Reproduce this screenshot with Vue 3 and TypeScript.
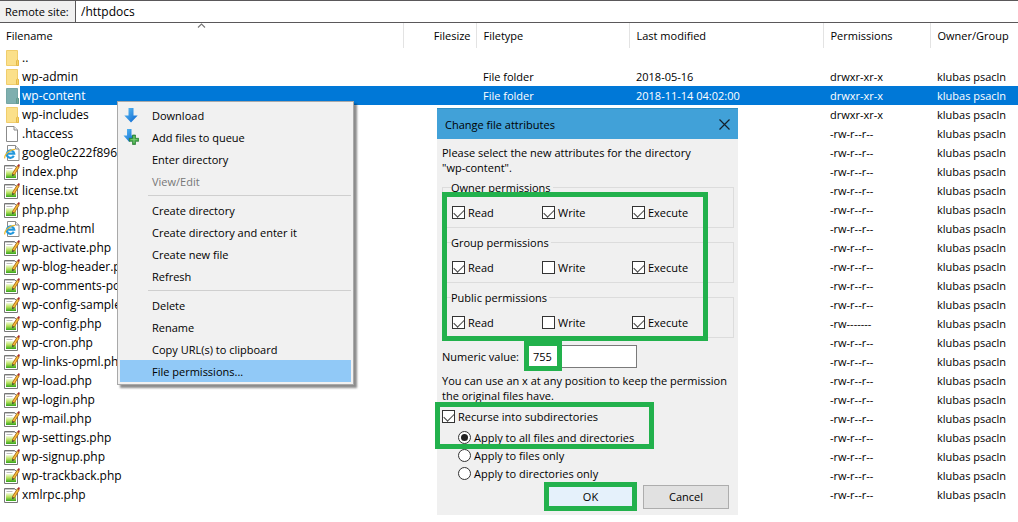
<script setup lang="ts">
import { ref } from 'vue'

type Kind = 'folder' | 'blank' | 'web' | 'script'
interface Entry {
  name: string
  kind: Kind
  type?: string
  modified?: string
  perms?: string
  owner?: string
}
interface MenuItem {
  label: string
  icon?: 'download' | 'queue'
  disabled?: boolean
  active?: boolean
}

const owner = 'klubas psacln'
const file = (name: string, kind: Kind = 'script', perms = '-rw-r--r--'): Entry => ({ name, kind, perms, owner })

const entries: Entry[] = [
  { name: '..', kind: 'folder' },
  { name: 'wp-admin', kind: 'folder', type: 'File folder', modified: '2018-05-16', perms: 'drwxr-xr-x', owner },
  { name: 'wp-content', kind: 'folder', type: 'File folder', modified: '2018-11-14 04:02:00', perms: 'drwxr-xr-x', owner },
  { name: 'wp-includes', kind: 'folder', perms: 'drwxr-xr-x', owner },
  file('.htaccess', 'blank'),
  file('google0c222f896fc.html', 'web'),
  file('index.php'),
  file('license.txt'),
  file('php.php'),
  file('readme.html', 'web'),
  file('wp-activate.php'),
  file('wp-blog-header.php'),
  file('wp-comments-post.php'),
  file('wp-config-sample.php'),
  file('wp-config.php', 'script', '-rw-------'),
  file('wp-cron.php'),
  file('wp-links-opml.php'),
  file('wp-load.php'),
  file('wp-login.php'),
  file('wp-mail.php'),
  file('wp-settings.php'),
  file('wp-signup.php'),
  file('wp-trackback.php'),
  file('xmlrpc.php'),
]
const selected = 'wp-content'

const menu: MenuItem[][] = [
  [
    { label: 'Download', icon: 'download' },
    { label: 'Add files to queue', icon: 'queue' },
    { label: 'Enter directory' },
    { label: 'View/Edit', disabled: true },
  ],
  [
    { label: 'Create directory' },
    { label: 'Create directory and enter it' },
    { label: 'Create new file' },
    { label: 'Refresh' },
  ],
  [
    { label: 'Delete' },
    { label: 'Rename' },
    { label: 'Copy URL(s) to clipboard' },
    { label: 'File permissions...', active: true },
  ],
]

const groups = ref([
  { title: 'Owner permissions', bits: [{ label: 'Read', on: true }, { label: 'Write', on: true }, { label: 'Execute', on: true }] },
  { title: 'Group permissions', bits: [{ label: 'Read', on: true }, { label: 'Write', on: false }, { label: 'Execute', on: true }] },
  { title: 'Public permissions', bits: [{ label: 'Read', on: true }, { label: 'Write', on: false }, { label: 'Execute', on: true }] },
])
const path = ref('/httpdocs')
const numeric = ref('755')
const recurse = ref(true)
const scopes = ['Apply to all files and directories', 'Apply to files only', 'Apply to directories only']
const scope = ref(scopes[0])
</script>

<template>
  <main class="panel">
    <svg class="defs" aria-hidden="true">
      <defs>
        <linearGradient id="green" x1="0" y1="0" x2="0" y2="1">
          <stop offset="0" stop-color="#f4fbdc" />
          <stop offset="0.5" stop-color="#b4e05a" />
          <stop offset="1" stop-color="#35a51c" />
        </linearGradient>
        <linearGradient id="blue" x1="0" y1="0" x2="1" y2="1">
          <stop offset="0" stop-color="#5cc0f5" />
          <stop offset="1" stop-color="#0a62cf" />
        </linearGradient>
      </defs>
    </svg>

    <div class="address">
      <label for="remote">Remote site:</label>
      <input id="remote" v-model="path" type="text" />
    </div>

    <table class="files">
      <colgroup>
        <col />
        <col class="c-size" />
        <col class="c-type" />
        <col class="c-date" />
        <col class="c-perm" />
        <col class="c-owner" />
      </colgroup>
      <thead>
        <tr>
          <th class="sorted">
            Filename
            <svg class="sort" width="9" height="5" viewBox="0 0 9 5" aria-hidden="true">
              <path d="M1 4.5 4.5 1 8 4.5" fill="none" stroke="#777" stroke-width="1.1" />
            </svg>
          </th>
          <th class="right">Filesize</th>
          <th>Filetype</th>
          <th>Last modified</th>
          <th>Permissions</th>
          <th>Owner/Group</th>
        </tr>
      </thead>
      <tbody>
        <tr v-for="e in entries" :key="e.name" :class="{ selected: e.name === selected }">
          <td class="first">
            <div class="cell">
              <svg class="icon" width="16" height="16" viewBox="0 0 16 16" aria-hidden="true">
                <template v-if="e.kind === 'folder'">
                  <path class="folder" d="M2.5.5h11v9l1 1v5h-12z" />
                  <path class="fold" d="M12.5 15.5v-4.5l1-1.5 1 1.5v4.5z" />
                </template>
                <template v-else-if="e.kind === 'blank'">
                  <path d="M2.500.500h7.500l3.500 3.500v11.500h-11z" fill="#fff" stroke="#8b8b8b" />
                  <path d="M10 .5V4h3.500" fill="#eee" stroke="#8b8b8b" />
                </template>
                <template v-else-if="e.kind === 'web'">
                  <path d="M3.500.500h8l3.500 3.500v11.500H3.500z" fill="#fff" stroke="#8b8b8b" />
                  <path d="M11.500.500V4H15" fill="#eee" stroke="#8b8b8b" />
                  <path d="M9.800 10.800A3.700 3.700 0 1 1 10.200 8.700H3.200" fill="none" stroke="#2197dc" stroke-width="2.200" />
                  <path d="M1 13.300C-.5 11 5 4.300 11.200 4.300" fill="none" stroke="#efb92c" stroke-width="1.200" />
                </template>
                <template v-else>
                  <path d="M.5 1.500h10l3 3v11H.5z" fill="#fff" stroke="#777" />
                  <path d="M2 6h10v8H2z" fill="url(#green)" />
                  <path d="M2 1v2M4 1v2M6 1v2M8 1v2M10 1v2" stroke="#777" stroke-width=".8" />
                  <path d="M2.500 4.500h6" stroke="#bbb" />
                  <path d="M14.500 2 9.200 10.500" stroke="#a86412" stroke-width="3" />
                  <path d="M14.300 2.300 9.300 10.300" stroke="#f6bd3d" stroke-width="1.600" />
                  <path d="m13.400 2 1.200-2 1.400 1-1.100 2z" fill="#a72d31" />
                  <path d="m8.200 12.300.2-2.600 1.900 1.200z" fill="#333" />
                </template>
              </svg>
              <span class="name">{{ e.name }}</span>
            </div>
          </td>
          <td></td>
          <td>{{ e.type }}</td>
          <td>{{ e.modified }}</td>
          <td>{{ e.perms }}</td>
          <td>{{ e.owner }}</td>
        </tr>
      </tbody>
    </table>

    <div class="menu" role="menu">
      <div v-for="(section, i) in menu" :key="i" class="section" role="group">
        <button
          v-for="item in section"
          :key="item.label"
          type="button"
          role="menuitem"
          :disabled="item.disabled"
          :class="{ active: item.active }"
        >
          <span class="slot">
            <svg v-if="item.icon" width="16" height="16" viewBox="0 0 16 16" aria-hidden="true">
              <template v-if="item.icon === 'download'">
                <path d="M5.500 1h5v7.500h4.200L8 15.500 1.300 8.500h4.200z" fill="url(#blue)" />
              </template>
              <template v-else>
                <path d="M4 0h4.500v6.500H12L6.200 13 .5 6.500H4z" fill="url(#blue)" />
                <path d="M9.500 6h3v3.300h3.200v3h-3.200v3.200h-3v-3.200H6.300v-3h3.200z" fill="#3fa442" stroke="#247a32" stroke-width=".7" />
                <path d="M11 7v7M7.500 10.700h7" stroke="#8ad684" stroke-width=".8" />
              </template>
            </svg>
          </span>
          {{ item.label }}
        </button>
      </div>
    </div>

    <form class="dialog" role="dialog" aria-labelledby="title" @submit.prevent>
      <header>
        <h1 id="title">Change file attributes</h1>
        <button type="button" class="close" aria-label="Close">
          <svg width="11" height="11" viewBox="0 0 11 11" aria-hidden="true">
            <path d="m.5.5 10 10m0-10-10 10" stroke="#13202b" stroke-width="1.200" />
          </svg>
        </button>
      </header>
      <div class="body">
        <p>Please select the new attributes for the directory<br />"wp-content".</p>

        <div class="groups">
          <fieldset v-for="g in groups" :key="g.title">
            <legend>{{ g.title }}</legend>
            <label v-for="b in g.bits" :key="b.label"><input v-model="b.on" type="checkbox" />{{ b.label }}</label>
          </fieldset>
          <span class="mark mark-groups"></span>
        </div>

        <div class="numeric">
          <label for="numeric">Numeric value:</label>
          <div class="field">
            <input id="numeric" v-model="numeric" type="text" />
            <span class="mark mark-numeric"></span>
          </div>
        </div>

        <p>You can use an x at any position to keep the permission<br />the original files have.</p>

        <div class="recurse">
          <label><input v-model="recurse" type="checkbox" />Recurse into subdirectories</label>
          <div class="scopes">
            <label v-for="s in scopes" :key="s"><input v-model="scope" type="radio" name="scope" :value="s" />{{ s }}</label>
          </div>
          <span class="mark mark-recurse"></span>
        </div>

        <footer>
          <button type="submit" class="ok">OK</button>
          <button type="button" class="cancel">Cancel</button>
        </footer>
      </div>
    </form>
  </main>
</template>

<style>
body {
  margin: 0;
  background: #fff;
}
</style>

<style scoped>
.panel {
  position: relative;
  min-height: 100vh;
  overflow: hidden;
  background: #fff;
  color: #000;
  font: 11px/15px "Open Sans", "Noto Sans", sans-serif;
}
* {
  box-sizing: border-box;
}
button,
input {
  font: inherit;
  color: inherit;
  margin: 0;
}
.defs {
  position: absolute;
  width: 0;
  height: 0;
}

.address {
  display: flex;
  height: 23px;
  border-top: 1px solid #5a585a;
  border-bottom: 1px solid #5a585a;
}
.address label {
  width: 75px;
  padding-left: 5px;
  background: #f0f0f0;
  line-height: 20px;
  white-space: nowrap;
}
.address input {
  flex: 1;
  min-width: 0;
  padding: 0 5px;
  border: 0;
  border-left: 1px solid #5a585a;
  background: #fff;
  font-size: 12px;
  outline: none;
}

.files {
  width: 100%;
  table-layout: fixed;
  border-collapse: collapse;
}
.c-size { width: 73px; }
.c-type { width: 153px; }
.c-date { width: 194px; }
.c-perm { width: 107px; }
.c-owner { width: 88px; }
th {
  position: relative;
  height: 25px;
  padding: 0 5px 0 6px;
  border-right: 1px solid #e3e3e3;
  font-weight: 400;
  text-align: left;
  white-space: nowrap;
}
th:last-child {
  border-right: 0;
}
th.right {
  text-align: right;
}
.sort {
  position: absolute;
  top: 0;
  left: 50%;
  margin-left: -4px;
}
td {
  height: 19px;
  padding: 0 0 0 7px;
  line-height: 19px;
  white-space: nowrap;
}
th + th {
  padding-left: 7px;
}
td.first {
  padding: 0;
}
.cell {
  display: flex;
  align-items: center;
  padding-left: 4px;
  font-size: 12px;
}
.icon {
  flex: none;
}
.name {
  flex: 1;
  padding-left: 2px;
}
.folder {
  fill: #fbe08a;
  stroke: #f0cd6c;
}
.fold {
  fill: #f7d469;
  stroke: #e5b94a;
}
.selected td {
  background: #0078d7;
  color: #fff;
}
.selected td.first {
  background: #fff;
}
.selected .name {
  background: #0078d7;
}
.selected .folder {
  fill: #7eafaf;
  stroke: #75a6a5;
}
.selected .fold {
  fill: #7ba896;
  stroke: #5e9990;
}

.menu {
  position: absolute;
  left: 117px;
  top: 101px;
  width: 237px;
  padding: 2px;
  border: 1px solid #a9a9a9;
  background: #f1f1f1;
  box-shadow: 3px 3px 2px rgba(0, 0, 0, 0.45);
}
.section + .section {
  padding-top: 7px;
  background: linear-gradient(#cfcfcf, #cfcfcf) 28px 3px / 100% 1px no-repeat;
}
.menu button {
  display: flex;
  align-items: center;
  width: 100%;
  height: 22px;
  padding: 0;
  border: 0;
  background: none;
  text-align: left;
}
.menu button:disabled {
  color: #777;
}
.menu button.active {
  background: #91c9f7;
}
.slot {
  display: flex;
  width: 32px;
  padding-left: 3px;
}

.dialog {
  position: absolute;
  left: 437px;
  top: 108px;
  width: 301px;
  background: #f0f0f0;
}
header {
  display: flex;
  align-items: center;
  justify-content: space-between;
  height: 31px;
  padding: 0 8px;
  border-top: 1px solid #2f8fc4;
  background: #41a1d8;
}
h1 {
  margin: 0;
  font-size: 11px;
  font-weight: 400;
}
.close {
  display: flex;
  padding: 0;
  border: 0;
  background: none;
}
.body {
  padding: 6px 4px 4px 5px;
}
p {
  margin: 0;
  white-space: nowrap;
}
.groups {
  position: relative;
  display: flex;
  flex-direction: column;
  gap: 7px;
  margin-top: 5px;
}
fieldset {
  display: flex;
  min-width: 0;
  height: 48px;
  margin: 0;
  padding: 10px 0 0 9px;
  border: 1px solid #dcdcdc;
}
legend {
  margin-left: -1px;
  padding: 0 2px 0 0;
}
label {
  display: flex;
  align-items: center;
}
fieldset label {
  width: 90px;
  height: 15px;
}
input[type='checkbox'],
input[type='radio'] {
  appearance: none;
  flex: none;
  width: 13px;
  height: 13px;
  margin-right: 3px;
  border: 1px solid #333;
  background: #fff;
}
input[type='checkbox']:checked::before {
  content: '';
  display: block;
  width: 9px;
  height: 5px;
  margin: 2px 0 0 1px;
  border: solid #444;
  border-width: 0 0 1px 1px;
  transform: rotate(-45deg);
}
input[type='radio'] {
  border-radius: 50%;
}
input[type='radio']:checked::before {
  content: '';
  display: block;
  width: 7px;
  height: 7px;
  margin: 2px;
  border-radius: 50%;
  background: #222;
}
.mark {
  position: absolute;
  border: 5px solid #22b14c;
  pointer-events: none;
}
.mark-groups {
  left: 0;
  top: 12px;
  width: 266px;
  height: 149px;
}
.numeric {
  display: flex;
  align-items: center;
  gap: 3px;
  margin-top: 7px;
}
.numeric label {
  width: 79px;
  white-space: nowrap;
}
.field {
  position: relative;
  display: flex;
  width: 113px;
}
.field input {
  width: 100%;
  height: 23px;
  padding: 0 8px;
  border: 1px solid #7a7a7a;
  background: #fff;
  outline: none;
}
.mark-numeric {
  left: 0;
  top: -4px;
  width: 38px;
  height: 30px;
}
.numeric + p {
  margin-top: 5px;
}
.recurse {
  position: relative;
  margin-top: 6px;
}
.recurse > label {
  height: 15px;
}
.scopes {
  padding: 4px 0 0 16px;
}
.scopes label {
  height: 18px;
}
.mark-recurse {
  left: -7px;
  top: -7px;
  width: 219px;
  height: 47px;
}
footer {
  display: flex;
  align-items: center;
  justify-content: flex-end;
  gap: 6px;
  padding-right: 5px;
}
.ok {
  width: 93px;
  height: 29px;
  border: 5px solid #22b14c;
  background: #e5f1fb;
  padding: 0;
}
.cancel {
  width: 86px;
  height: 24px;
  border: 1px solid #adadad;
  background: #e1e1e1;
  padding: 0;
}
</style>
